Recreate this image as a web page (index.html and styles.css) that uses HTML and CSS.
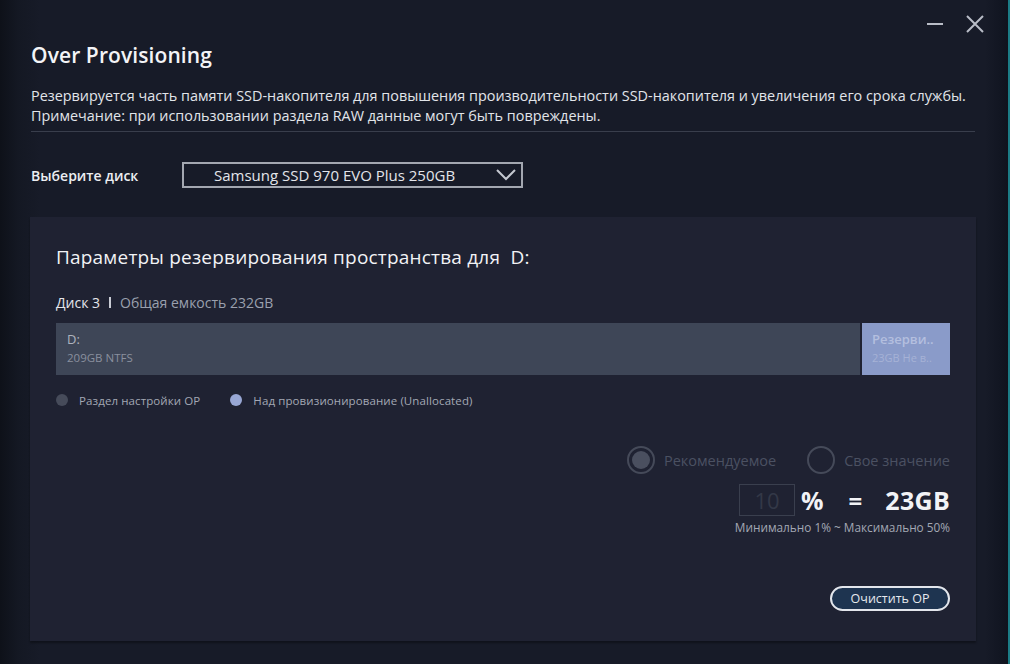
FILE: index.html
```html
<!DOCTYPE html>
<html lang="ru">
<head>
<meta charset="utf-8">
<title>Over Provisioning</title>
<link rel="stylesheet" href="styles.css">
</head>
<body>
<div class="window">
  <div class="topbar">
    <button class="ctl" aria-label="minimize">
      <svg width="16" height="16" viewBox="0 0 16 16"><line x1="0" y1="8" x2="16" y2="8" stroke="#b9bdc7" stroke-width="2"/></svg>
    </button>
    <button class="ctl" aria-label="close">
      <svg width="18" height="18" viewBox="0 0 18 18"><path d="M1 1 L17 17 M17 1 L1 17" stroke="#b9bdc7" stroke-width="2" fill="none"/></svg>
    </button>
  </div>
  <h1 class="title">Over Provisioning</h1>
  <p class="desc">Резервируется часть памяти SSD-накопителя для повышения производительности SSD-накопителя и увеличения его срока службы.<br>Примечание: при использовании раздела RAW данные могут быть повреждены.</p>
  <div class="divider"></div>
  <div class="select-row">
    <span class="select-label">Выберите диск</span>
    <div class="select">
      <span class="select-text">Samsung SSD 970 EVO Plus 250GB</span>
      <svg class="chev" width="20" height="12" viewBox="0 0 20 12"><polyline points="1,1 10,10 19,1" fill="none" stroke="#c4c8d0" stroke-width="2"/></svg>
    </div>
  </div>
  <section class="panel">
    <h2 class="panel-title">Параметры резервирования пространства для&nbsp; D:</h2>
    <div class="disk-info"><span class="disk-name">Диск 3</span><span class="sep"></span><span class="disk-cap">Общая емкость 232GB</span></div>
    <div class="bar">
      <div class="bar-d">
        <span class="bar-name">D:</span>
        <span class="bar-sub">209GB NTFS</span>
      </div>
      <div class="bar-res">
        <span class="bar-name">Резерви..</span>
        <span class="bar-sub">23GB Не в..</span>
      </div>
    </div>
    <div class="legend">
      <span class="dot dot-op"></span><span class="legend-text">Раздел настройки OP</span>
      <span class="dot dot-un"></span><span class="legend-text">Над провизионирование (Unallocated)</span>
    </div>
    <div class="controls">
      <div class="radios">
        <span class="radio checked"></span><span class="radio-label">Рекомендуемое</span>
        <span class="radio"></span><span class="radio-label">Свое значение</span>
      </div>
      <div class="value-row">
        <span class="num-box">10</span>
        <span class="pct">%</span>
        <span class="eq">=</span>
        <span class="gb">23GB</span>
      </div>
      <div class="range">Минимально 1% ~ Максимально 50%</div>
      <button class="clear-btn">Очистить OP</button>
    </div>
  </section>
</div>
</body>
</html>
```
FILE: styles.css
```css
* { box-sizing: border-box; }
html, body { margin: 0; padding: 0; }
body {
  width: 1010px;
  height: 664px;
  overflow: hidden;
  background: #1c7c86;
  font-family: "Open Sans", "Noto Sans", sans-serif;
  color: #eef0f4;
}
.window {
  width: 1008px;
  height: 664px;
  background:
    linear-gradient(90deg, #0e1119 0px, #141823 18px, #171b28 40px, #171b28 985px, #121622 1000px, #10131d 1008px);
  padding: 0 33px 0 30px;
  display: flex;
  flex-direction: column;
}
.topbar {
  height: 40px;
  padding-top: 8px;
  display: flex;
  justify-content: flex-end;
  align-items: center;
  gap: 22px;
  margin-right: -9px;
}
.ctl {
  background: none;
  border: 0;
  padding: 0;
  width: 18px;
  height: 18px;
  display: flex;
  align-items: center;
  justify-content: center;
}
.title {
  margin: 1px 0 0 1px;
  font-size: 21px;
  line-height: 28px;
  font-weight: 600;
  color: #f3f4f7;
  letter-spacing: 0.1px;
}
.desc {
  margin: 17px 0 0 1px;
  font-size: 14.4px;
  line-height: 20px;
  color: #e2e5ea;
  letter-spacing: 0;
}
.divider {
  margin: 5px 0 0 1px;
  height: 1px;
  background: #393e4c;
  width: 944px;
}
.select-row {
  margin: 30px 0 0 1px;
  display: flex;
  align-items: center;
  height: 26px;
}
.select-label {
  width: 151px;
  font-size: 14px;
  font-weight: 600;
  color: #eceef2;
}
.select {
  width: 341px;
  height: 26px;
  border: 2px solid #a3a7b0;
  display: flex;
  align-items: center;
  padding: 0 5px 0 30px;
  justify-content: space-between;
}
.select-text {
  font-size: 15px;
  color: #e3e5ea;
  letter-spacing: 0;
}
.panel {
  margin-top: 29px;
  width: 946px;
  height: 424px;
  background: #1f2232;
  box-shadow: 0 2px 2px rgba(0,0,0,0.35);
  padding: 27px 26px 0 26px;
  display: flex;
  flex-direction: column;
}
.panel-title {
  margin: 0;
  font-size: 19px;
  line-height: 26px;
  font-weight: 500;
  color: #f2f3f6;
  letter-spacing: 0.2px;
}
.disk-info {
  margin-top: 22px;
  height: 20px;
  display: flex;
  align-items: center;
  font-size: 14px;
}
.disk-name { color: #e4e6eb; }
.sep {
  width: 2px;
  height: 11px;
  background: #c9ccd4;
  margin: 0 9px 0 9px;
}
.disk-cap { color: #9aa0ae; }
.bar {
  margin-top: 11px;
  height: 52px;
  display: flex;
  gap: 2px;
}
.bar-d, .bar-res {
  display: flex;
  flex-direction: column;
  padding: 6px 11px 0 11px;
  overflow: hidden;
  white-space: nowrap;
}
.bar-d { flex: 1; background: #3e4657; }
.bar-res { width: 88px; background: #8a9bc9; padding-left: 10px; }
.bar-name {
  font-size: 13px;
  line-height: 20px;
  color: #aeb3bf;
}
.bar-sub {
  font-size: 11.5px;
  line-height: 18px;
  color: #8a909e;
}
.bar-res .bar-name { color: #b4bfdf; font-weight: 600; }
.bar-res .bar-sub { color: #a6b2d6; font-size: 11px; }
.legend {
  margin-top: 17px;
  height: 16px;
  display: flex;
  align-items: center;
  font-size: 11.5px;
  color: #a3a8b4;
}
.dot {
  width: 12px;
  height: 12px;
  border-radius: 50%;
  margin-left: 0px;
  margin-right: 11px;
}
.dot-op { background: #464b5a; }
.dot-un { background: #98a7d4; margin-left: 30px; }
.legend-text { letter-spacing: 0.1px; }
.controls {
  display: flex;
  flex-direction: column;
  align-items: flex-end;
}
.radios {
  margin-top: 38px;
  height: 28px;
  display: flex;
  align-items: center;
}
.radio {
  width: 28px;
  height: 28px;
  border-radius: 50%;
  border: 2px solid #454a59;
  position: relative;
  margin-right: 9px;
}
.radio.checked::after {
  content: "";
  position: absolute;
  left: 3px; top: 3px;
  width: 18px; height: 18px;
  border-radius: 50%;
  background: #4a4f5f;
}
.radio-label {
  font-size: 14.5px;
  color: #4b5162;
  margin-right: 31px;
}
.radio-label:last-child { margin-right: 0; }
.value-row {
  margin-top: 10px;
  height: 32px;
  display: flex;
  align-items: center;
}
.num-box {
  width: 56px;
  height: 32px;
  border: 1px solid #3a3f4e;
  display: flex;
  align-items: center;
  justify-content: center;
  font-size: 22px;
  color: #333847;
}
.pct {
  margin-left: 6px;
  font-size: 25px;
  font-weight: 700;
  color: #f2f3f6;
}
.eq {
  margin-left: 25px;
  font-size: 24px;
  font-weight: 700;
  color: #f2f3f6;
}
.gb {
  margin-left: 23px;
  font-size: 25px;
  font-weight: 700;
  color: #f2f3f6;
  letter-spacing: 0.3px;
}
.range {
  margin-top: 4px;
  font-size: 11.8px;
  line-height: 14px;
  color: #a3a8b4;
}
.clear-btn {
  margin-top: 52px;
  width: 120px;
  height: 25px;
  border: 2px solid #e3e6ec;
  border-radius: 13px;
  background: #1e3450;
  color: #e6e9ee;
  font-family: "Open Sans", "Noto Sans", sans-serif;
  font-size: 12.5px;
  padding: 0;
}
```
